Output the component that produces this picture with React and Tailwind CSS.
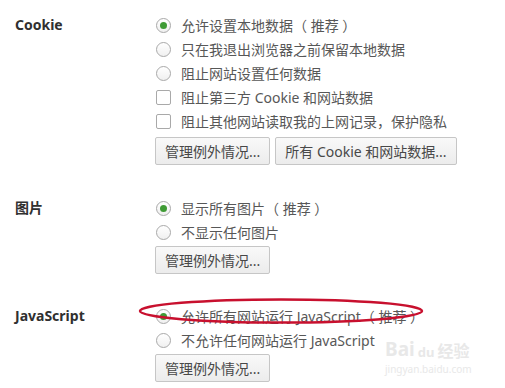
import React from 'react'

const FONT = { fontFamily: '"Noto Sans", "Noto Sans CJK SC", sans-serif' }

function Radio({ checked, children }) {
  return (
    <div className="h-6 flex items-center gap-[10px]">
      <span className="w-[15px] h-[15px] rounded-full border border-[#a9a9a9] bg-gradient-to-b from-white to-[#f0f0f0] flex items-center justify-center shrink-0">
        {checked && <span className="w-[7px] h-[7px] rounded-full bg-[#3f9b35]" />}
      </span>
      <span className="text-[14px] text-[#575757] whitespace-pre">{children}</span>
    </div>
  )
}

function Check({ children }) {
  return (
    <div className="h-6 flex items-center gap-[10px]">
      <span className="w-[15px] h-[15px] rounded-[2px] border border-[#a9a9a9] bg-white shrink-0" />
      <span className="text-[14px] text-[#575757] whitespace-nowrap">{children}</span>
    </div>
  )
}

function Btn({ children }) {
  return (
    <button className="h-[28px] px-[9px] rounded-[2px] border border-[#c6c6c6] bg-gradient-to-b from-[#f9f9f9] to-[#ececec] text-[14px] text-[#484848] whitespace-nowrap">
      {children}
    </button>
  )
}

function Section({ label, children, className = '' }) {
  return (
    <div className={`flex ${className}`}>
      <div className="w-[156px] pl-[15px] h-6 leading-6 text-[14px] font-bold text-[#303030] shrink-0">{label}</div>
      <div className="flex flex-col">{children}</div>
    </div>
  )
}

export default function App() {
  return (
    <div className="relative w-[505px] h-[388px] bg-white overflow-hidden pt-[13px]" style={FONT}>
      <Section label="Cookie">
        <Radio checked>允许设置本地数据（ 推荐 ）</Radio>
        <Radio>只在我退出浏览器之前保留本地数据</Radio>
        <Radio>阻止网站设置任何数据</Radio>
        <Check>阻止第三方 Cookie 和网站数据</Check>
        <Check>阻止其他网站读取我的上网记录，保护隐私</Check>
        <div className="flex gap-[5px] mt-[4px] -ml-px">
          <Btn>管理例外情况...</Btn>
          <Btn>所有 Cookie 和网站数据...</Btn>
        </div>
      </Section>

      <Section label="图片" className="mt-[31px]">
        <Radio checked>显示所有图片（ 推荐 ）</Radio>
        <Radio>不显示任何图片</Radio>
        <div className="flex mt-[2px] -ml-px">
          <Btn>管理例外情况...</Btn>
        </div>
      </Section>

      <Section label="JavaScript" className="mt-[30px]">
        <Radio checked>允许所有网站运行 JavaScript（ 推荐 ）</Radio>
        <Radio>不允许任何网站运行 JavaScript</Radio>
        <div className="flex mt-[2px] -ml-px">
          <Btn>管理例外情况...</Btn>
        </div>
      </Section>

      {/* red marker ellipse */}
      <svg className="absolute left-0 top-0 pointer-events-none" width="505" height="388">
        <ellipse cx="281" cy="311" rx="141" ry="11.5" fill="none" stroke="#c8102e" strokeWidth="2.5" />
      </svg>

      {/* watermark */}
      <div className="absolute left-[385px] top-[340px] pointer-events-none text-[#e8e8e8] leading-none whitespace-nowrap">
        <div className="flex items-end gap-[3px]">
          <span className="text-[19px] font-bold">Bai</span>
          <span className="text-[13px] font-bold">du</span>
          <span className="text-[16px] font-bold">经验</span>
        </div>
        <div className="text-[10px] mt-[5px]">jingyan.baidu.com</div>
      </div>
    </div>
  )
}
